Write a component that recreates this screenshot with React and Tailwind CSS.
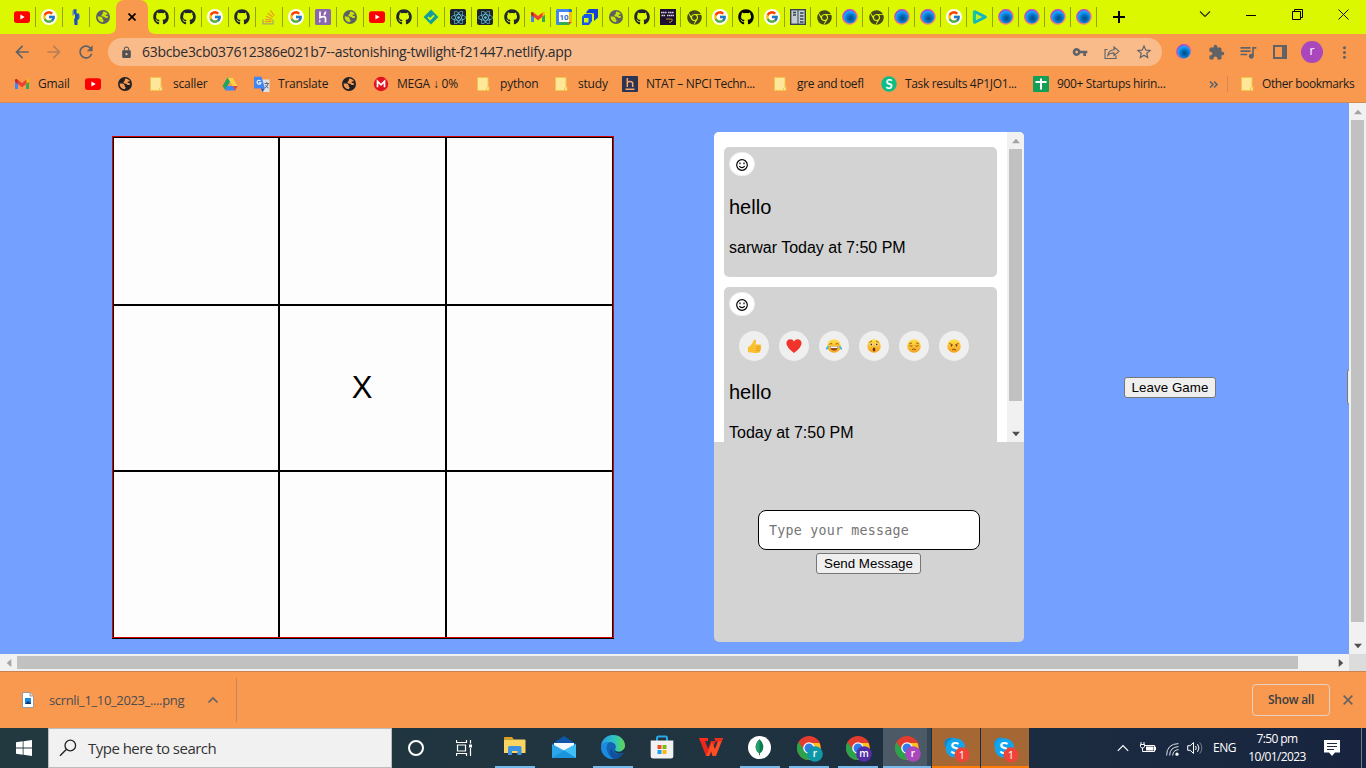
import React from "react";
import { FaGithub, FaReact, FaChrome, FaStackOverflow } from "react-icons/fa";
import { FcGoogle } from "react-icons/fc";
import {
  MdArrowBack, MdArrowForward, MdRefresh, MdLock, MdVpnKey, MdStarBorder,
  MdExtension, MdQueueMusic, MdMoreVert,
} from "react-icons/md";

const UI = "font-['Open_Sans','Noto_Sans',sans-serif]";
const ARIAL = "font-['Liberation_Sans',Arial,sans-serif]";

function YouTube() {
  return (
    <svg viewBox="0 0 16 16" className="size-4">
      <rect y="2.3" width="16" height="11.6" rx="2.6" fill="#f00" />
      <path d="M6.4 5.6v5l4.3-2.5z" fill="#fff" />
    </svg>
  );
}
function Google() {
  return (
    <span className="flex size-4 items-center justify-center rounded-full bg-white">
      <FcGoogle className="size-[14px]" />
    </span>
  );
}
function Globe({ dark }) {
  return (
    <svg viewBox="0 0 16 16" className="size-4">
      <circle cx="8" cy="8" r="7" fill={dark ? "#202124" : "#5b6062"} />
      <path
        d="M2.6 7.600c1.900-.3 4.300.1 4.900 1.300.4.9-.2 1.400.6 1.800.9.4.6 1.800-.3 2.500-3 0-5.200-2.500-5.200-5.600zM8.300 2.500c2 0 3.700 1 4.600 2.800-.6.3-1.700 0-2.200.6-.5.500.4 1.200 1 1.100.8 0 1.500.5 1.600 1.200-1 1-2.500.9-3.300.2-.8-.8-1.600-.9-2.700-1-1.100-.2-1.300-1.500-.2-1.900 1-.3.3-1.700 1.200-3z"
        fill={dark ? "#f8994f" : "#c9e300"}
      />
    </svg>
  );
}
const Github = () => <FaGithub className="size-4 text-[#20262c]" />;
const GithubBlack = () => <FaGithub className="size-4 text-black" />;
const Chrome = () => <FaChrome className="mx-[0.5px] size-[15px] text-[#45481c]" />;
function Gmail() {
  return (
    <svg viewBox="0 0 16 16" className="size-4">
      <path d="M1 4.500v8.500h3V7.200z" fill="#4285f4" />
      <path d="M12 7.200V13h3V4.500z" fill="#34a853" />
      <path d="M1 4v1.800l3 2.400V4.200L2.800 3C2 2.700 1 3.200 1 4z" fill="#c5221f" />
      <path d="M12 4.200v4l3-2.400V4c0-.9-1-1.400-1.800-1z" fill="#fbbc04" />
      <path d="M3.500 3.500 8 7l4.500-3.500v4.300L8 11.200 3.500 7.800z" fill="#ea4335" />
    </svg>
  );
}
function ReactTab() {
  return (
    <span className="flex size-4 items-center justify-center rounded-[2px] bg-[#20232a]">
      <FaReact className="size-[15px] text-[#61c9e8]" />
    </span>
  );
}
function Orb() {
  return (
    <svg viewBox="0 0 16 16" className="size-4">
      <defs>
        <linearGradient id="ring" x1="0.1" y1="0" x2=".8" y2="1">
          <stop offset="0" stopColor="#8a3cf0" />
          <stop offset=".45" stopColor="#f0509c" />
          <stop offset="1" stopColor="#ffb050" />
        </linearGradient>
        <radialGradient id="ball" cx=".55" cy=".6">
          <stop offset="0" stopColor="#064a82" />
          <stop offset=".45" stopColor="#0668b8" />
          <stop offset="1" stopColor="#15a0fa" />
        </radialGradient>
      </defs>
      <circle cx="8" cy="8" r="7.900" fill="url(#ring)" />
      <circle cx="8" cy="8" r="6.500" fill="url(#ball)" />
    </svg>
  );
}
const Person = () => (
  <svg viewBox="0 0 16 16" className="size-4">
    <path d="M5.500.3h3v5h-3zM7 4.500h4v6H7zM6 9.500h3.500V16H6.500z" fill="#1f4fc4" />
    <path d="M4.500 1.500h1.200v5H4.500zM10.700 5.500h1v4h-1z" fill="#5a84c0" />
  </svg>
);
const StackOverflow = () => (
  <svg viewBox="0 0 16 16" className="size-4">
    <path d="M2 10.500v4.300h10v-4.300" stroke="#a9a86a" strokeWidth="1.300" fill="none" />
    <path d="M3.800 12.700h6.600M4 10.300l6.500.9M4.800 7.200l6 2.600M6.700 4l5.200 4.300M9.500 1.300l3.800 5.500" stroke="#f09a1e" strokeWidth="1.200" />
  </svg>
);
const Heroku = () => (
  <svg viewBox="0 0 16 16" className="size-4">
    <rect width="16" height="16" rx="1.500" fill="#8b68ae" />
    <path d="M5 2.500V8.600q5.500-2.300 5.500 1V13.500M10.500 2.500q0 2-1.600 3.200" stroke="#fff" strokeWidth="1.700" fill="none" />
    <path d="M4.200 10.500v3.200l1.800-1.600z" fill="#fff" />
  </svg>
);
const Diamond = () => (
  <svg viewBox="0 0 16 16" className="size-4">
    <path d="M8 .6 15.400 8 8 15.400.6 8z" fill="#129f9c" />
    <path d="M5 8l2.200 2.200L11 6.400" stroke="#d9f700" strokeWidth="1.700" fill="none" />
  </svg>
);
const Calendar = () => (
  <svg viewBox="0 0 16 16" className="size-4">
    <path d="M0 1.500Q0 0 1.500 0H13v3H3v13H1.500Q0 16 0 14.500z" fill="#4285f4" />
    <path d="M13 0h1.500Q16 0 16 1.500V3h-3z" fill="#1967d2" />
    <path d="M13 3h3v10h-3z" fill="#fbbc04" />
    <path d="M3 13h10v3H3z" fill="#34a853" />
    <path d="M13 13h3l-3 3z" fill="#ea4335" />
    <path d="M3 3h10v10H3z" fill="#fff" />
    <text x="8" y="10.900" fontSize="8" fontWeight="700" textAnchor="middle" fontFamily="Roboto" fill="#2368d8">10</text>
  </svg>
);
const Boxes = () => (
  <svg viewBox="0 0 16 16" className="size-4">
    <path d="M4.500 2.500 7 0h9v8.500L12 12V4.500H4.500z" fill="#1240d8" />
    <path d="M0 8l2.500-3H10v7l-3 4H0z" fill="#1556ee" />
    <path d="M2 9h4.500v4.500H2z" fill="#d9f700" />
    <path d="M10 5.500V4.500H5.500M11 12V4.500" stroke="#d9f700" fill="none" strokeWidth=".8" />
  </svg>
);
const DarkPage = () => (
  <svg viewBox="0 0 16 16" className="size-4">
    <rect width="16" height="16" fill="#1d0f2e" />
    <path d="M1 3.500h6M8 3.500h6M1.500 6.500h4M7 6.500h7" stroke="#d8d2e2" strokeWidth="1.500" strokeDasharray="1.600 .4" />
    <path d="M6 10h5q2 0 1 2t-3 1" stroke="#b9952f" fill="none" />
  </svg>
);
const Server = () => (
  <svg viewBox="0 0 16 16" className="size-4">
    <rect x=".7" y=".7" width="14.600" height="14.600" fill="#c3cdd2" stroke="#37434c" strokeWidth="1.400" />
    <path d="M8 1v14" stroke="#37434c" />
    <path d="M3 3.500h3M3 6h3M10 4h3.500M10 7h3.500M10 10h3.500M10 13h3.500" stroke="#37434c" strokeWidth="1.500" />
  </svg>
);
const Play = () => (
  <svg viewBox="0 0 16 16" className="size-4">
    <path d="M2.500 2.500 13.500 8 2.500 13.500z" fill="#c4f020" stroke="#12b3c6" strokeWidth="2.600" strokeLinejoin="round" />
    <path d="M2 2.500v10" stroke="#12cf8c" strokeWidth="2.400" />
  </svg>
);

const leftTabs = [YouTube, Google, Person];
const midTabs = [Github, Github, Google, Github, StackOverflow, Google, Heroku, Globe, YouTube, Github, Diamond, ReactTab, ReactTab];
const rightTabs = [
  Github, Gmail, Calendar, Boxes, Globe, Github, DarkPage, Chrome, Google, GithubBlack, Google, Server,
  Chrome, Orb, Chrome, Orb, Orb, Google, Play, Orb, Orb, Orb, Orb,
];

function Tab({ icon: Icon, narrow, last }) {
  return (
    <div className={`flex h-[34px] items-center pl-[5px] ${narrow ? "w-[26px]" : "w-[27px]"} justify-between shrink-0`}>
      <Icon />
      {!last && <i className="h-5 w-px bg-[#95a30f]" />}
    </div>
  );
}

function TabStrip() {
  return (
    <div className="flex h-[34px] bg-[#dbf800] pl-[9px]">
      {leftTabs.map((I, i) => <Tab key={i} icon={I} />)}
      <Tab icon={Globe} last />
      <div className="relative -ml-px flex h-[34px] w-8 shrink-0 items-center justify-center rounded-t-[8px] bg-[#f8994f]">
        <svg viewBox="0 0 8 8" className="absolute bottom-0 -left-2 size-2"><path d="M8 0v8H0Q8 8 8 0" fill="#f8994f" /></svg>
        <svg viewBox="0 0 8 8" className="absolute bottom-0 -right-2 size-2"><path d="M0 0v8h8Q0 8 0 0" fill="#f8994f" /></svg>
        <svg viewBox="0 0 8 8" className="size-2"><path d="M.5.5l7 7M7.500.5l-7 7" stroke="#000" strokeWidth="1.700" /></svg>
      </div>
      {midTabs.map((I, i) => <Tab key={i} icon={I} />)}
      {rightTabs.map((I, i) => <Tab key={i} icon={I} narrow />)}
      <div className="flex w-11 items-center justify-center">
        <svg viewBox="0 0 12 12" className="size-3"><path d="M6 0v12M0 6h12" stroke="#000" strokeWidth="2" /></svg>
      </div>
      <div className="ml-[41px] flex h-7 w-[184px] items-center">
        <span className="flex w-[46px] justify-center"><svg viewBox="0 0 12 12" className="size-3"><path d="M1 3.500l5 5 5-5" stroke="#222" fill="none" strokeWidth="1.100" /></svg></span>
        <span className="flex w-[46px] justify-center"><i className="mt-0.5 h-px w-[10px] bg-black" /></span>
        <span className="flex w-[46px] justify-center"><svg viewBox="0 0 11 11" className="size-[11px]"><path d="M.5 2.500h8v8h-8zM2.500 2.500v-2h8v8h-2" stroke="#000" fill="none" /></svg></span>
        <span className="flex w-[46px] justify-center"><svg viewBox="0 0 11 11" className="size-[11px]"><path d="M.5.5l10 10M10.500.5l-10 10" stroke="#111" fill="none" /></svg></span>
      </div>
    </div>
  );
}

function Slot({ children }) {
  return <span className="flex w-8 shrink-0 items-center justify-center">{children}</span>;
}

function Toolbar() {
  return (
    <div className="flex h-9 items-center pl-1.5 text-[#5f6368]">
      <Slot><MdArrowBack className="size-[20px]" /></Slot>
      <Slot><MdArrowForward className="size-[20px] text-[#b97e58]" /></Slot>
      <Slot><MdRefresh className="size-[20px]" /></Slot>
      <div className="ml-1.5 flex h-7 w-[1054px] shrink-0 items-center rounded-full bg-[#fabb8b] pl-3 pr-0.5">
        <MdLock className="size-[13px] text-[#4f5357]" />
        <span className={`${UI} ml-[9px] flex-1 pb-0.5 whitespace-nowrap text-[14px] tracking-[-0.3px] text-[#2a2c30]`}>
          63bcbe3cb037612386e021b7--astonishing-twilight-f21447.netlify.app
        </span>
        <Slot><MdVpnKey className="size-[16px]" /></Slot>
        <Slot>
          <svg viewBox="0 0 16 16" className="size-4"><path d="M3.500 5.500H1v9h11v-3M3.800 11.500q.6-5.300 6.200-5.800V3l5 4.300-5 4.200V8.900q-3.700-.2-6.200 2.600z" stroke="#5f6368" fill="none" strokeWidth="1.100" /></svg>
        </Slot>
        <Slot><MdStarBorder className="size-[18px]" /></Slot>
      </div>
      <span className="w-1.5" />
      <Slot><Orb /></Slot>
      <Slot><MdExtension className="size-[17px]" /></Slot>
      <Slot><MdQueueMusic className="size-[20px]" /></Slot>
      <Slot>
        <svg viewBox="0 0 14 14" className="size-[14px]"><path d="M1 1h12v12H1z" fill="none" stroke="#5f6368" strokeWidth="2" /><path d="M9 0h5v14H9z" fill="#5f6368" /></svg>
      </Slot>
      <Slot><span className={`${UI} flex size-[22px] items-center justify-center rounded-full bg-[#ab47bc] pb-0.5 text-[12px] text-white`}>r</span></Slot>
      <Slot><MdMoreVert className="size-[19px]" /></Slot>
    </div>
  );
}

const Folder = () => (
  <svg viewBox="0 0 16 16" className="size-4">
    <path d="M1.500 1.500h10.500v9l1 .5v3.500H1.500z" fill="#ffe79a" stroke="#efc64c" />
    <path d="M10.500 14.500v-2.300l1.500-1.600" fill="none" stroke="#efc64c" />
  </svg>
);
const Drive = () => (
  <svg viewBox="0 0 16 16" className="size-4">
    <path d="M5.500 1.500h5L6 9.500 3.200 14 .5 10z" fill="#1fa463" />
    <path d="M5.500 1.500h5L15.500 10h-5z" fill="#ffcf48" />
    <path d="M5.200 10H15.500l-2.500 4.500H3z" fill="#4285f4" />
    <path d="M11 10h4.500L13 14.500z" fill="#ea4335" />
    <path d="M8 6l2.300 4H5.700z" fill="#f8994f" />
  </svg>
);
const Translate = () => (
  <svg viewBox="0 0 16 16" className="size-4">
    <path d="M7 3.500h8.500V16H9.500z" fill="#dfe1e5" />
    <path d="M10.500 7.500h4.500M12.700 6v1.500M14 8q-.5 2.500-3 4M11.500 9q1 2 3 3" stroke="#5f6b7a" fill="none" />
    <path d="M0 .8h7.500L11 12.500H0z" fill="#4285f4" />
    <path d="M7 12.500h4L8.500 16z" fill="#1f57c3" />
    <path d="M6.500 4.800A2 2 0 1 0 7 6.700H5" stroke="#fff" fill="none" strokeWidth="1.100" />
  </svg>
);
const Mega = () => (
  <svg viewBox="0 0 16 16" className="size-4">
    <circle cx="8" cy="8" r="7.200" fill="#e0141e" />
    <path d="M4.500 11.200V5.300L8 8.800l3.500-3.500v5.900" stroke="#fff" strokeWidth="1.700" fill="none" />
  </svg>
);
const HackerEarth = () => (
  <svg viewBox="0 0 16 16" className="size-4">
    <rect width="16" height="16" rx="1" fill="#2c3454" />
    <path d="M5.300 2v9M5.300 7q0-1.500 2.700-1.500T10.700 7.500V11M3.500 13.300h9" stroke="#f8a868" strokeWidth="1.500" fill="none" />
  </svg>
);
const GreenS = () => (
  <svg viewBox="0 0 16 16" className="size-4">
    <circle cx="8" cy="8" r="7.700" fill="#0bbd87" />
    <text x="8" y="12.600" fontSize="13" fontWeight="700" textAnchor="middle" fontFamily="Lato" fill="#fff">S</text>
  </svg>
);
const Sheets = () => (
  <svg viewBox="0 0 16 16" className="size-4">
    <rect width="16" height="16" rx="1" fill="#149f57" />
    <path d="M2.500 6h11M8 2.500v11" stroke="#fff" strokeWidth="2" />
  </svg>
);
const DarkGlobe = () => <Globe dark />;

const bookmarks = [
  [Gmail, "Gmail", "w-[71px]"],
  [YouTube, "", "w-8"],
  [DarkGlobe, "", "w-8"],
  [Folder, "scaller", "w-[73px]"],
  [Drive, "", "w-8"],
  [Translate, "Translate", "w-[87px]"],
  [DarkGlobe, "", "w-8"],
  [Mega, "MEGA ↓ 0%", "w-[103px]"],
  [Folder, "python", "w-[78px]"],
  [Folder, "study", "w-[68px]"],
  [HackerEarth, "NTAT – NPCI Techn...", "w-[151px]"],
  [Folder, "gre and toefl", "w-[108px]"],
  [GreenS, "Task results 4P1JO1...", "w-[152px]"],
  [Sheets, "900+ Startups hirin...", "w-[176px]"],
];

function Bookmarks() {
  return (
    <div className={`${UI} flex h-[33px] items-center border-b border-[#d08a52] pb-1 pl-[14px] text-[12px] tracking-[-0.2px] text-[#1c1c1c]`}>
      {bookmarks.map(([Icon, label, w], i) => (
        <span key={i} className={`flex shrink-0 items-center gap-2 whitespace-nowrap ${w} ${label.length > 12 ? "tracking-[-0.34px]" : ""}`}>
          <Icon />
          {label && <span className="-mt-px">{label}</span>}
        </span>
      ))}
      <svg viewBox="0 0 9 7" className="h-[7px] w-[9px] shrink-0"><path d="M1 .5l3 3-3 3M5 .5l3 3-3 3" stroke="#5f6368" strokeWidth="1.600" fill="none" /></svg>
      <i className="ml-[9px] h-4 w-px bg-[#d08a5a]" />
      <span className="ml-3 flex items-center gap-[6px] whitespace-nowrap tracking-[-0.42px]"><Folder /><span className="-mt-px">Other bookmarks</span></span>
    </div>
  );
}

function Arrow({ dir, muted }) {
  const d = { up: "M0 5l3.500-4L7 5z", down: "M0 1l3.500 4L7 1z", left: "M5 0L1 3.500 5 7z", right: "M1 0l4 3.500L1 7z" }[dir];
  return (
    <span className="flex size-[17px] shrink-0 items-center justify-center">
      <svg viewBox={dir === "up" || dir === "down" ? "0 0 7 6" : "0 0 6 7"} className="size-2"><path d={d} fill={muted ? "#a3a3a3" : "#505050"} /></svg>
    </span>
  );
}

function Board() {
  const cells = ["", "", "", "", "X", "", "", "", ""];
  return (
    <div className={`${ARIAL} mt-[33px] ml-28 grid h-[502px] w-[502px] shrink-0 grid-cols-[166px_167px_167px] grid-rows-[168px_166px_166px] border border-[#d40000] bg-[#fdfdfd] shadow-[0_1px_0_#000]`}>
      {cells.map((c, i) => (
        <div key={i} className={`flex items-center justify-center border border-black pr-px pb-0.5 text-[31px] leading-none text-black ${i > 5 ? "border-b-0" : ""}`}>
          {c}
        </div>
      ))}
    </div>
  );
}

const smiley = (
  <svg viewBox="0 0 12 12" className="mt-0.5 size-3">
    <circle cx="6" cy="6" r="5.300" fill="none" stroke="#000" strokeWidth="1.200" />
    <path d="M4 3.600v1.600M8 3.600v1.600M3.300 7.200q2.700 3 5.400 0" stroke="#000" strokeWidth="1.200" fill="none" />
  </svg>
);

function Face({ children }) {
  return (
    <svg viewBox="0 0 16 16" className="size-4">
      <defs>
        <linearGradient id="skin" x1="0" y1="0" x2="0" y2="1">
          <stop offset="0" stopColor="#ffe04a" />
          <stop offset="1" stopColor="#f5a01c" />
        </linearGradient>
      </defs>
      <circle cx="8" cy="8" r="6.800" fill="url(#skin)" />
      {children}
    </svg>
  );
}
const reactions = [
  <svg viewBox="0 0 16 16" className="size-[15px]">
    <path d="M1 8.500q3-.8 5-4.500Q7 .5 8.500.6q2 .8.500 5.200h5.500q1 .8.300 2 .9 1-.1 2.200.6 1-.4 2 .3 1.200-.8 2-3.500 1.700-8.500.3L1 14z" fill="#fbc02d" />
    <path d="M9.500 8.300h4.800M9.500 10.400h4.800M9.500 12.400h4.200" stroke="#e0901a" strokeWidth=".8" />
  </svg>,
  <svg viewBox="0 0 16 16" className="size-4">
    <path d="M8 15Q.5 9.500.4 5.200.8 1.200 4.500 1.200 7 1.300 8 3.500 9 1.300 11.500 1.200q3.700 0 4.100 4Q15.500 9.500 8 15z" fill="#f0342c" />
  </svg>,
  <Face>
    <path d="M3.500 6.300q1.300-1.600 2.800-.2M9.700 6.100q1.500-1.400 2.800.2" stroke="#8b5318" fill="none" strokeWidth=".9" />
    <path d="M4 8.500h8q-.5 4-4 4t-4-4z" fill="#8a4218" />
    <path d="M4.500 8.500h7v1.600h-7z" fill="#fff" />
    <path d="M3.300 7.700Q0 8.300-.2 11.100q1.500 2 3.500-3.400zM12.700 7.700q3.300.6 3.500 3.400-1.500 2-3.500-3.400z" fill="#3cb4ee" />
  </Face>,
  <Face>
    <path d="M3.500 4.300L6 3M12.500 4.300L10 3" stroke="#8a5014" fill="none" strokeWidth=".8" />
    <circle cx="5.300" cy="6.500" r="1.500" fill="#fff6d0" /><circle cx="10.700" cy="6.500" r="1.500" fill="#fff6d0" />
    <circle cx="5.300" cy="6.500" r=".9" fill="#5b3010" /><circle cx="10.700" cy="6.500" r=".9" fill="#5b3010" />
    <ellipse cx="8" cy="11.500" rx="1.300" ry="2" fill="#70301a" />
  </Face>,
  <Face>
    <path d="M3.300 5.800L6 4.800M12.700 5.800L10 4.800M3.500 7.500q1.500 1.200 3 .3M9.500 7.800q1.500.9 3-.3M6 11.700q2-1.500 4 0" stroke="#8a5014" strokeWidth=".9" fill="none" />
  </Face>,
  <Face>
    <path d="M3.500 5.400l3.300 1.600M12.500 5.400L9.200 7M6 12q2-1.800 4 0" stroke="#8a4a10" strokeWidth="1" fill="none" />
    <circle cx="5.400" cy="7.800" r=".8" fill="#5b3010" /><circle cx="10.600" cy="7.800" r=".8" fill="#5b3010" />
  </Face>,
];

function Message({ meta, withReactions }) {
  return (
    <div className="flex shrink-0 flex-col rounded-[5px] bg-[#d3d3d3] p-[5px] text-black">
      <span className="flex h-6 w-[26px] items-center justify-center rounded-full border border-[#efefef] bg-white">{smiley}</span>
      {withReactions && (
        <div className="mt-[15px] ml-[10px] flex gap-[10px]">
          {reactions.map((r, i) => (
            <span key={i} className="flex size-[30px] items-center justify-center rounded-full bg-[#efefef]">{r}</span>
          ))}
        </div>
      )}
      <p className="mt-5 text-[20px] leading-[23px]">hello</p>
      <p className="mt-5 mb-[15px] text-[16px] leading-[18px]">{meta}</p>
    </div>
  );
}

function Chat() {
  return (
    <div className={`${ARIAL} mt-[29px] ml-[100px] flex h-[510px] w-[310px] shrink-0 flex-col overflow-hidden rounded-[5px] bg-[#d3d3d3]`}>
      <div className="flex h-[310px] shrink-0 overflow-hidden bg-white">
        <div className="flex w-[293px] flex-col gap-[10px] overflow-hidden px-[10px] pt-[15px]">
          <Message meta="sarwar Today at 7:50 PM" />
          <Message meta="Today at 7:50 PM" withReactions />
        </div>
        <div className="flex w-[17px] flex-col items-center bg-[#f1f1f1]">
          <Arrow dir="up" muted />
          <i className="h-[252px] w-[13px] bg-[#c1c1c1]" />
          <span className="flex-1" />
          <Arrow dir="down" />
        </div>
      </div>
      <div className="flex flex-col items-center pt-[68px]">
        <div className="flex h-10 w-[222px] items-center rounded-[8px] border border-black bg-white pt-0.5 pl-[10px] font-['DejaVu_Sans_Mono',monospace] text-[13.3px] tracking-[0.23px] text-[#757575]">
          Type your message
        </div>
        <button className="mt-[3px] mr-px h-[21px] w-[105px] rounded-[3px] border border-[#767676] bg-[#efefef] text-[13.33px] leading-none whitespace-nowrap text-black">Send Message</button>
      </div>
    </div>
  );
}

function Page() {
  return (
    <div className="flex h-[551px] shrink-0">
      <div className="flex w-[1349px] items-start overflow-hidden bg-[#74a0ff]">
        <Board />
        <Chat />
        <button className={`${ARIAL} mt-[274px] ml-[100px] h-[21px] w-[92px] shrink-0 rounded-[3px] border border-[#767676] bg-[#efefef] text-[13.33px] leading-none tracking-[0.05px] whitespace-nowrap text-black`}>Leave Game</button>
        <span className="mt-[266px] ml-[131px] h-9 w-10 shrink-0 rounded-[3px] border border-[#767676] bg-[#efefef]" />
      </div>
      <div className="flex w-[17px] flex-col items-center bg-[#f1f1f1]">
        <Arrow dir="up" muted />
        <i className="h-[502px] w-[13px] bg-[#c1c1c1]" />
        <span className="flex-1" />
        <Arrow dir="down" />
      </div>
    </div>
  );
}

function Downloads() {
  return (
    <div className={`${UI} flex h-[57px] items-center border-t border-[#c88450] pl-[22px]`}>
      <svg viewBox="0 0 12 16" className="h-4 w-3 shrink-0">
        <path d="M.5.5h7.500l3.500 3.500v11.500H.5z" fill="#fff" stroke="#9a9a9a" />
        <path d="M8 .5V4h3.500" fill="#ddd" stroke="#9a9a9a" />
        <path d="M3 6h6v6H3z" fill="#1e88d8" /><path d="M3 12l3-3 3 2v1z" fill="#0c3c78" />
      </svg>
      <span className="mt-px ml-[15px] w-[158px] text-[13px] tracking-[-0.36px] whitespace-nowrap text-[#4a4c50]">scrnli_1_10_2023_....png</span>
      <svg viewBox="0 0 12 8" className="h-2 w-3 shrink-0"><path d="M1.500 6.500L6 2l4.500 4.500" stroke="#5f6368" strokeWidth="1.600" fill="none" /></svg>
      <i className="ml-[17px] h-11 w-px bg-[#c38760]" />
      <button className="ml-auto h-8 w-[78px] rounded-[4px] border border-[#e6d3c6] text-[12px] font-semibold tracking-[-0.25px] text-[#3a3d42]">Show all</button>
      <svg viewBox="0 0 10 10" className="mr-[13px] ml-[13px] size-[10px]"><path d="M.7.7l8.600 8.600M9.300.7L.7 9.300" stroke="#666462" strokeWidth="1.700" /></svg>
    </div>
  );
}

function ChromeBadge({ letter, color }) {
  return (
    <svg viewBox="0 0 26 26" className="mt-1 ml-px size-[26px]">
      <circle cx="12" cy="12" r="12" fill="#e33b2e" />
      <path d="M12 12V7L22.400 7A12 12 0 0 1 12 24z" fill="#fcc31e" />
      <path d="M12 24A12 12 0 0 1 1.600 6L7.500 14.500 12 17.500 15 16z" fill="#2ba24c" />
      <circle cx="12" cy="12" r="5.800" fill="#fff" />
      <circle cx="12" cy="12" r="4.500" fill="#2f7de8" />
      <circle cx="18" cy="18" r="7.800" fill={color} />
      <text x="18" y="21.300" fontSize="10" fontWeight="600" textAnchor="middle" fontFamily="Open Sans" fill="#fff">{letter}</text>
    </svg>
  );
}
function Skype({ stacked }) {
  return (
    <svg viewBox="0 0 26 26" className="mt-[5px] ml-0.5 size-[26px]">
      <circle cx="7.500" cy="7" r="6.500" fill="#1596dc" />
      {stacked && <circle cx="6" cy="6.500" r="5.500" fill="#0f86cc" />}
      <circle cx="15" cy="15" r="6" fill="#0f9be4" />
      <circle cx="11.500" cy="11" r="9.800" fill="#12a5ee" />
      <text x="11" y="17" fontSize="17" fontWeight="700" textAnchor="middle" fontFamily="Lato" fill="#fff">S</text>
      <circle cx="18" cy="17.800" r="7.500" fill="#ef4438" />
      <text x="18" y="21.800" fontSize="11" textAnchor="middle" fontFamily="Open Sans" fill="#fff">1</text>
    </svg>
  );
}

const Explorer = () => (
  <svg viewBox="0 0 24 24" className="size-6">
    <path d="M1 3q0-1 1-1h7l2 2.500H1z" fill="#e0a21a" />
    <path d="M1 4.500h20.500q1 0 1 1V18H1z" fill="#fcd462" />
    <path d="M5 20v-7.500q0-1.500 1.500-1.500h10.500q1.500 0 1.500 1.500V20h-4v-4H9v4z" fill="#3c92e0" />
  </svg>
);
const Mail = () => (
  <svg viewBox="0 0 24 24" className="size-6">
    <path d="M0 9L12 1l12 8-12 9z" fill="#0f56a8" />
    <path d="M2 8h20v6l-10 5-10-5z" fill="#f5f8fc" />
    <path d="M0 9l12 6.500L24 9v14H0z" fill="#2ba6e8" />
    <path d="M24 9v14L12 15.500z" fill="#3fc0f4" /><path d="M0 23L12 15.500 24 23z" fill="#1b94de" />
  </svg>
);
const Edge = () => (
  <svg viewBox="0 0 24 24" className="size-6">
    <defs>
      <linearGradient id="edgeTop"><stop offset="0" stopColor="#2a9be6" /><stop offset=".55" stopColor="#2cc4c4" /><stop offset="1" stopColor="#62d84e" /></linearGradient>
    </defs>
    <circle cx="12" cy="12" r="12" fill="#1464b4" />
    <path d="M0 11C1 4 6 0 12 0c7 0 12 5 12 10.500 0 4-3 6-6.500 6-3 0-4-1.500-3-3C16 10 13 7 9 7 5 7 1 9 0 11z" fill="url(#edgeTop)" />
    <path d="M0 11.500C1.500 8 5 6.500 8.500 7 6 8.500 4.500 13 6.500 17c1.500 4 4.500 6.500 6.500 7C5 24.500-.5 18.500 0 11.500z" fill="#1b8be0" />
    <path d="M11 13.500c-.5 4 5 7.500 11.500 4.200C20 22 16 24 12.800 24 8 21 7.500 15 11 13.500z" fill="#10509c" />
    <path d="M22.800 17.500C20 19 14.500 19 13 15.500q3 2 6.500 1.300Q22 16 24 12.500v9z" fill="#20343f" />
  </svg>
);
const Store = () => (
  <svg viewBox="0 0 24 24" className="size-6">
    <path d="M7 6V3q0-1.500 1.500-1.500h7Q17 1.500 17 3v3" stroke="#28a8e8" strokeWidth="2" fill="none" />
    <path d="M.7 5.500h22.600V21q0 2.500-2.500 2.500H3.200Q.7 23.500.7 21z" fill="#f1f1f1" />
    <path d="M7.500 10h4v4h-4z" fill="#e8502a" /><path d="M12.500 10h4v4h-4z" fill="#80b818" />
    <path d="M7.500 15h4v4h-4z" fill="#18a0e8" /><path d="M12.500 15h4v4h-4z" fill="#fbb414" />
  </svg>
);
const Wps = () => (
  <svg viewBox="0 0 24 24" className="size-6">
    <path d="M0 3h5l4 11 3-8h5l-6.500 15H7z" fill="#e8281c" />
    <path d="M0 3h9v3H1.500z" fill="#ff2b1c" />
    <path d="M9.500 16L13 7l3 7 4-11h4l-7 18h-3.500L12 16l-2 5H7z" fill="#ff4d24" />
    <path d="M15 3h9l-1.500 3.500H17z" fill="#f02c1c" />
  </svg>
);
const Mongo = () => (
  <svg viewBox="0 0 24 24" className="mr-px size-[23px]">
    <circle cx="12" cy="12" r="12" fill="#fff" />
    <path d="M12 3.500q4 3.700 4 8 0 4-3.500 6.500v2h-1v-2Q8 15.500 8 11.500q0-4.300 4-8z" fill="#0d7a50" />
    <path d="M12 3.500q-4 3.700-4 8 0 4 3.500 6.500l.5 2z" fill="#26a06a" />
  </svg>
);

function TaskApp({ children, line, cls = "" }) {
  return (
    <span className={`flex h-10 w-12 shrink-0 flex-col items-center ${cls}`}>
      <span className="flex h-[38px] items-center">{children}</span>
      {line && <i className={`h-0.5 shrink-0 ${line}`} />}
    </span>
  );
}

function Taskbar() {
  return (
    <div className={`${UI} flex h-10 bg-linear-to-r from-[#21393f] via-[#203440] to-[#18243f] text-white`}>
      <span className="flex w-12 shrink-0 items-center justify-center">
        <svg viewBox="0 0 16 16" className="size-4"><path d="M0 2.300l6.700-1v6.200H0zM7.500 1.200L16 0v7.500H7.500zM0 8.500h6.700v6.200l-6.700-1zM7.500 8.500H16V16l-8.500-1.200z" fill="#fff" /></svg>
      </span>
      <div className="flex w-[344px] shrink-0 items-center border border-[#bcbcbc] bg-[#f1f1f1] pl-[10px]">
        <svg viewBox="0 0 18 18" className="size-[18px]"><circle cx="11.300" cy="6.500" r="5.300" fill="none" stroke="#222" strokeWidth="1.300" /><path d="M7.500 10.300L1 16.700" stroke="#222" strokeWidth="1.400" /></svg>
        <span className="ml-[11px] text-[15px] tracking-[-0.52px] text-[#333]">Type here to search</span>
      </div>
      <span className="flex w-12 shrink-0 items-center justify-center"><i className="size-4 rounded-full border-2 border-white" /></span>
      <span className="mr-[3px] flex w-12 shrink-0 items-center justify-center">
        <svg viewBox="0 0 16 16" className="size-4"><path d="M.5 0v2.500h10V0M.5 16v-2.500h10V16M1.500 5h8v6h-8zM14.500 0v3.500M14.500 8v8" stroke="#fff" fill="none" strokeWidth="1.200" /><path d="M13 4.500h3v3h-3z" fill="#fff" /></svg>
      </span>
      <div className="flex gap-px">
        <TaskApp line="w-10 bg-[#76b9ed]"><Explorer /></TaskApp>
        <TaskApp><Mail /></TaskApp>
        <TaskApp line="w-10 bg-[#76b9ed]"><Edge /></TaskApp>
        <TaskApp><Store /></TaskApp>
        <TaskApp><Wps /></TaskApp>
        <TaskApp line="w-10 bg-[#76b9ed]"><Mongo /></TaskApp>
        <TaskApp line="w-10 bg-[#76b9ed]"><ChromeBadge letter="r" color="#0d97a7" /></TaskApp>
        <TaskApp line="w-10 bg-[#76b9ed]"><ChromeBadge letter="m" color="#512da8" /></TaskApp>
        <TaskApp line="w-12 bg-[#76b9ed]" cls="bg-linear-to-r from-[#4b5a66] from-92% to-[#354653] to-92%"><ChromeBadge letter="r" color="#ab47bc" /></TaskApp>
        <TaskApp line="w-12 bg-[#ff7a00]" cls="bg-[#a56835]"><Skype stacked /></TaskApp>
        <TaskApp line="w-12 bg-[#ff7a00]" cls="bg-[#a56835]"><Skype /></TaskApp>
      </div>
      <div className="ml-[88px] flex items-center">
        <svg viewBox="0 0 12 8" className="mr-[11px] h-2 w-3"><path d="M.8 6.800L6 1.600l5.200 5.200" stroke="#fff" fill="none" strokeWidth="1.200" /></svg>
        <svg viewBox="0 0 16 12" className="h-3 w-4"><path d="M5 3.500h9.500v6H5M14.500 5h1v3h-1M1 0v2.500M4 0v2.500M.5 2.500h4v2l-1 1.500h-2l-1-1.500zM2.500 6v3.500H5" stroke="#fff" fill="none" /><path d="M6 4.500h7.500v4H6z" fill="#fff" /></svg>
        <svg viewBox="0 0 13 13" className="mt-0.5 ml-[10px] size-[13px]"><path d="M.6 12.500Q.8.8 12.500.6M3.600 12.500q.4-8.500 8.900-8.900M6.600 12.500q.5-5.400 5.900-5.900" stroke="#dde3e8" fill="none" /><circle cx="11" cy="11.200" r="1.600" fill="#fff" /></svg>
        <svg viewBox="0 0 17 14" className="ml-2 h-[14px] w-[17px]"><path d="M.7 4.700h2.500L6.500 1.500v11L3.200 9.300H.7z" stroke="#fff" fill="none" /><path d="M8.500 5q1.500 2 0 4M10.500 3.200q3 3.800 0 7.600" stroke="#fff" fill="none" /><path d="M12.800 1.500q4 5.500 0 11" stroke="#75808e" fill="none" /></svg>
        <span className="ml-[9px] w-[23px] text-[12px] tracking-[-0.5px]">ENG</span>
        <span className="ml-[7px] w-[68px] text-center text-[12px] leading-[18px] tracking-[-0.6px] whitespace-nowrap">7:50 pm<br />10/01/2023</span>
        <svg viewBox="0 0 16 16" className="ml-[13px] size-4"><path d="M0 0h16v12.500h-5L8 16l-3-3.500H0z" fill="#fff" /><path d="M3 3.500h10M3 6.500h10M3 9.500h7" stroke="#1a2840" /></svg>
      </div>
      <i className="mr-1 ml-auto h-10 w-px bg-[#6f7a8a]" />
    </div>
  );
}

export default function App() {
  return (
    <div className="flex h-[768px] w-[1366px] flex-col overflow-hidden bg-[#f8994f]">
      <TabStrip />
      <Toolbar />
      <Bookmarks />
      <Page />
      <div className="flex h-[17px] shrink-0 items-center bg-[#f1f1f1]">
        <Arrow dir="left" muted />
        <i className="h-[13px] w-[1281px] bg-[#c1c1c1]" />
        <span className="flex-1" />
        <Arrow dir="right" />
        <i className="size-[17px] bg-[#dcdcdc]" />
      </div>
      <Downloads />
      <Taskbar />
    </div>
  );
}
